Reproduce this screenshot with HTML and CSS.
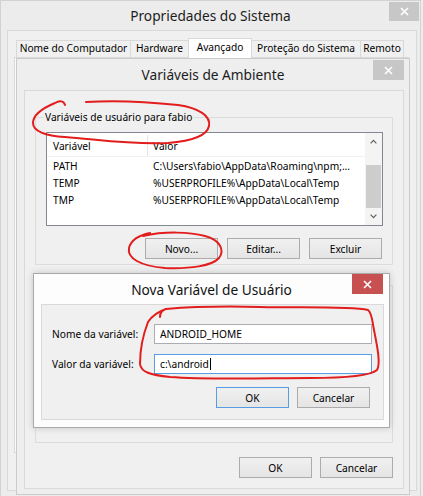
FILE: index.html
```html
<!DOCTYPE html>
<html lang="pt-BR">
<head>
<meta charset="utf-8">
<title>Propriedades do Sistema</title>
<link rel="stylesheet" href="styles.css">
</head>
<body>
<div class="desktop">

  <section class="win win-sys">
    <header class="titlebar">
      <span class="title">Propriedades do Sistema</span>
      <span class="close close-gray"><svg width="9" height="9" viewBox="0 0 9 9"><path d="M1 1L8 8M8 1L1 8" stroke="#fff" stroke-width="1.6"/></svg></span>
    </header>
    <div class="client sys-client">
      <div class="tabs">
        <div class="tab t1">Nome do Computador</div>
        <div class="tab t2">Hardware</div>
        <div class="tab t3 active">Avançado</div>
        <div class="tab t4">Proteção do Sistema</div>
        <div class="tab t5">Remoto</div>
      </div>
      <div class="tabpanel"></div>
    </div>
  </section>

  <section class="win win-env">
    <header class="titlebar">
      <span class="title">Variáveis de Ambiente</span>
      <span class="close close-gray"><svg width="9" height="9" viewBox="0 0 9 9"><path d="M1 1L8 8M8 1L1 8" stroke="#fff" stroke-width="1.6"/></svg></span>
    </header>
    <div class="client env-client">
      <fieldset class="group group-user">
        <legend>Variáveis de usuário para fabio</legend>
        <div class="listview">
          <div class="lv-main">
            <div class="lv-head"><span class="c1">Variável</span><span class="c2">Valor</span></div>
            <div class="lv-rows">
              <div class="lv-row"><span class="c1">PATH</span><span class="c2">C:\Users\fabio\AppData\Roaming\npm;...</span></div>
              <div class="lv-row"><span class="c1">TEMP</span><span class="c2">%USERPROFILE%\AppData\Local\Temp</span></div>
              <div class="lv-row"><span class="c1">TMP</span><span class="c2">%USERPROFILE%\AppData\Local\Temp</span></div>
            </div>
          </div>
          <div class="scrollbar">
            <span class="sb-btn"><svg width="7" height="5" viewBox="0 0 7 5"><path d="M0.6 4.4L3.5 1.4L6.4 4.4" fill="none" stroke="#606060" stroke-width="1.2"/></svg></span>
            <span class="sb-gap"></span>
            <span class="sb-thumb"></span>
            <span class="sb-btn"><svg width="7" height="5" viewBox="0 0 7 5"><path d="M0.6 0.6L3.5 3.6L6.4 0.6" fill="none" stroke="#606060" stroke-width="1.2"/></svg></span>
          </div>
        </div>
        <div class="btn-row group-btns">
          <button type="button" class="btn">Novo...</button>
          <button type="button" class="btn">Editar...</button>
          <button type="button" class="btn">Excluir</button>
        </div>
      </fieldset>

      <div class="group group-sys">
        <div class="listview lv-sys"></div>
        <div class="btn-row group-btns">
          <button type="button" class="btn" aria-hidden="true"></button>
          <button type="button" class="btn" aria-hidden="true"></button>
          <button type="button" class="btn" aria-hidden="true"></button>
        </div>
      </div>

      <div class="btn-row dialog-btns">
        <button type="button" class="btn">OK</button>
        <button type="button" class="btn">Cancelar</button>
      </div>
    </div>
  </section>

  <section class="win win-new">
    <header class="titlebar">
      <span class="title">Nova Variável de Usuário</span>
      <span class="close close-red"><svg width="9" height="9" viewBox="0 0 9 9"><path d="M1 1L8 8M8 1L1 8" stroke="#fff" stroke-width="1.6"/></svg></span>
    </header>
    <div class="client new-client">
      <span class="lbl">Nome da variável:</span>
      <div class="field">ANDROID_HOME</div>
      <span class="lbl">Valor da variável:</span>
      <div class="field focus">c:\android<span class="caret"></span></div>
      <div class="btn-row new-btns">
        <button type="button" class="btn default">OK</button>
        <button type="button" class="btn">Cancelar</button>
      </div>
    </div>
  </section>

  <svg class="marks" width="423" height="496" viewBox="0 0 423 496">
    <g fill="none" stroke="#e21d1d" stroke-width="2" stroke-linecap="round" stroke-linejoin="round">
      <path d="M65,105 C64,101 60,100 55,103 C43,108 33,115 33,123 C33,131 45,136 65,137 C95,139 130,145 168,143 C192,141 207,136 209,126 C211,116 199,108 178,105 C150,102 118,100 86,102"/>
      <path d="M150,233 C140,235 131,240 129,248 C127,258 140,266 165,268 C190,269 212,266 219,258 C225,250 220,240 205,236 C190,232 165,231 143,236"/>
      <path d="M160,317 C160,313 162,310 166,309 C160,311 152,316 148,322 C143,335 140,352 140,364 C141,372 150,375 170,377 C210,380 270,378 310,378 C345,378 370,376 377,370 C381,364 377,345 374,330 C372,320 372,313 368,310 C350,306 300,308 260,307 C220,306 190,307 166,309"/>
    </g>
  </svg>

</div>
</body>
</html>
```

FILE: styles.css
```css
* { box-sizing: border-box; }
html, body { margin: 0; padding: 0; }
body {
  font-family: "Noto Sans", "Open Sans", sans-serif;
  font-size: 10.2px;
  color: #000;
  background: #ececec;
}

.desktop {
  position: relative;
  width: 423px;
  height: 496px;
  overflow: hidden;
  background: #ececec;
}

/* windows on the desktop */
.win {
  position: absolute;
  display: flex;
  flex-direction: column;
}

.titlebar {
  flex: none;
  display: grid;
  grid-template-columns: 1fr auto 1fr;
  align-items: start;
}
.title {
  grid-column: 2;
  align-self: center;
  font-size: 13.7px;
  color: #1c1c1c;
  white-space: nowrap;
}
.close {
  grid-column: 3;
  justify-self: end;
  display: flex;
  align-items: center;
  justify-content: center;
}
.close svg { display: block; }
.close-gray { background: #c7c7c7; }
.close-red { background: #c75050; }

.client {
  flex: none;
  border: 1px solid #d9d9d9;
  background: #f0f0f0;
}

/* Propriedades do Sistema */
.win-sys {
  left: 0;
  top: 0;
  width: 421px;
  height: 497px;
  border: 1px solid #d2d2d2;
  background: #ececec;
}
.win-sys .titlebar { height: 29px; }
.win-sys .close { width: 30px; height: 19px; margin: 1px 1px 0 0; }
.sys-client {
  margin: 0 3px 0 6px;
  height: 461px;
  padding: 7px 0 0 6px;
}
.tabs {
  display: flex;
  align-items: flex-start;
  height: 19px;
  margin-left: 2px;
  position: relative;
  z-index: 1;
}
.tab {
  height: 17px;
  margin-top: 2px;
  margin-right: -1px;
  border: 1px solid #d9d9d9;
  border-bottom: 0;
  background: #f0f0f0;
  text-align: center;
  line-height: 15px;
  white-space: nowrap;
}
.tab.active {
  height: 20px;
  margin-top: 0;
  background: #fff;
  line-height: 16px;
}
.t1 { width: 115px; }
.t2 { width: 59px; }
.t3 { width: 64px; }
.t4 { width: 110px; }
.t5 { width: 44px; }
.tabpanel {
  width: 395px;
  height: 396px;
  border: 1px solid #d9d9d9;
  background: #fbfbfb;
}

/* Variáveis de Ambiente */
.win-env {
  left: 16px;
  top: 58px;
  width: 394px;
  height: 437px;
  border: 1px solid #cbcbcb;
  background: #eeeeee;
}
.win-env .titlebar { height: 31px; }
.win-env .close { width: 31px; height: 20px; margin: 1px 5px 0 0; }
.env-client {
  margin: 0 5px 0 7px;
  height: 399px;
  display: flex;
  flex-direction: column;
}

.group {
  margin: 19px 10px 0 10px;
  padding: 8px 9px 5px 10px;
  border: 1px solid #dcdcdc;
  min-width: 0;
}
.group legend {
  padding: 0 1px;
  margin-left: -2px;
  line-height: 14px;
}
.group-sys {
  margin-top: 20px;
  padding: 12px 9px 14px 10px;
}

.listview {
  display: flex;
  height: 94px;
  border: 1px solid #828790;
  background: #fff;
}
.lv-sys { height: 97px; }
.lv-main { flex: 1; min-width: 0; }
.lv-head {
  display: flex;
  height: 24px;
  padding-top: 2px;
  line-height: 22px;
  border-bottom: 1px solid #f2f2f2;
}
.lv-head .c1 { border-right: 1px solid #e5e5e5; }
.lv-rows { padding-top: 1px; }
.lv-row {
  display: flex;
  height: 17px;
  line-height: 17px;
  white-space: nowrap;
}
.c1 { width: 101px; padding-left: 6px; flex: none; }
.c2 { padding-left: 5px; }

.scrollbar {
  width: 17px;
  display: flex;
  flex-direction: column;
  background: #f4f4f4;
}
.sb-btn {
  height: 17px;
  display: flex;
  align-items: center;
  justify-content: center;
}
.sb-btn svg { display: block; }
.sb-gap { height: 15px; }
.sb-thumb {
  height: 43px;
  margin: 0 1px;
  background: #cdcdcd;
}

.btn-row { display: flex; }
.group-btns {
  justify-content: flex-end;
  gap: 9px;
  margin: 12px 1px 0 0;
}
.dialog-btns {
  justify-content: flex-end;
  gap: 8px;
  margin: 14px 10px 0 0;
}

.btn {
  width: 73px;
  height: 21px;
  padding: 0;
  margin: 0;
  border: 1px solid #acacac;
  border-radius: 0;
  background: linear-gradient(#f0f0f0, #e5e5e5);
  font: inherit;
  color: #000;
  display: flex;
  align-items: center;
  justify-content: center;
}
.btn.default { border-color: #569de5; }

/* Nova Variável de Usuário */
.win-new {
  left: 33px;
  top: 273px;
  width: 357px;
  height: 155px;
  border: 1px solid #a9a9a9;
  background: #fdfdfd;
  box-shadow: 0 0 7px rgba(0, 0, 0, 0.18);
}
.win-new .titlebar { height: 30px; }
.win-new .title { color: #111; }
.win-new .close { width: 31px; height: 20px; margin: 0 6px 0 0; }
.new-client {
  margin: 0 5px 0 7px;
  height: 116px;
  padding: 19px 11px 0 10px;
  display: grid;
  grid-template-columns: 102px 218px;
  row-gap: 10px;
  align-items: center;
  align-content: start;
}
.lbl { white-space: nowrap; }
.field {
  height: 20px;
  border: 1px solid #abadb3;
  background: #fff;
  padding: 0 5px;
  line-height: 18px;
  white-space: nowrap;
}
.field.focus { border-color: #569de5; }
.caret {
  display: inline-block;
  width: 1px;
  height: 12px;
  margin-left: 1px;
  background: #000;
  vertical-align: -2px;
}
.new-btns {
  grid-column: 1 / -1;
  justify-self: end;
  gap: 8px;
  margin: 3px 2px 0 0;
}

/* hand-drawn red annotations over the screenshot */
.marks {
  position: absolute;
  left: 0;
  top: 0;
  pointer-events: none;
}
```
